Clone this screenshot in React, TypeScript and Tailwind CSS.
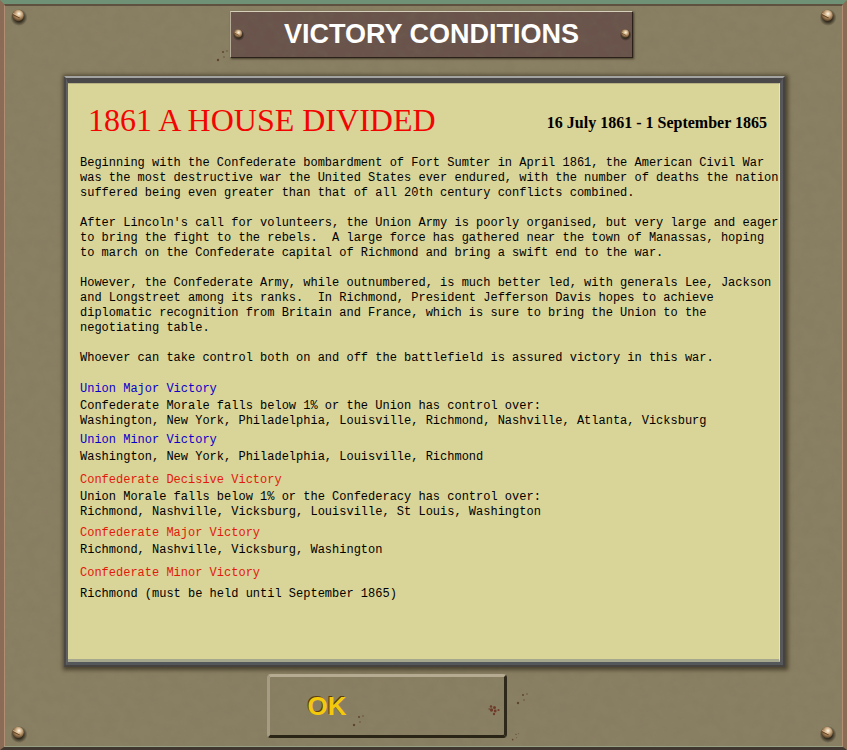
import React from 'react';

interface Condition {
  title: string;
  side: 'union' | 'confederate';
  lines: string[];
  spacing: string;
  gap: string;
}

const story: string[][] = [
  [
    'Beginning with the Confederate bombardment of Fort Sumter in April 1861, the American Civil War',
    'was the most destructive war the United States ever endured, with the number of deaths the nation',
    'suffered being even greater than that of all 20th century conflicts combined.',
  ],
  [
    "After Lincoln's call for volunteers, the Union Army is poorly organised, but very large and eager",
    'to bring the fight to the rebels.  A large force has gathered near the town of Manassas, hoping',
    'to march on the Confederate capital of Richmond and bring a swift end to the war.',
  ],
  [
    'However, the Confederate Army, while outnumbered, is much better led, with generals Lee, Jackson',
    'and Longstreet among its ranks.  In Richmond, President Jefferson Davis hopes to achieve',
    'diplomatic recognition from Britain and France, which is sure to bring the Union to the',
    'negotiating table.',
  ],
  ['Whoever can take control both on and off the battlefield is assured victory in this war.'],
];

const conditions: Condition[] = [
  {
    title: 'Union Major Victory', side: 'union', spacing: 'mt-4', gap: 'mt-0.5',
    lines: [
      'Confederate Morale falls below 1% or the Union has control over:',
      'Washington, New York, Philadelphia, Louisville, Richmond, Nashville, Atlanta, Vicksburg',
    ],
  },
  {
    title: 'Union Minor Victory', side: 'union', spacing: 'mt-1', gap: 'mt-0.5',
    lines: ['Washington, New York, Philadelphia, Louisville, Richmond'],
  },
  {
    title: 'Confederate Decisive Victory', side: 'confederate', spacing: 'mt-2', gap: 'mt-0.5',
    lines: [
      'Union Morale falls below 1% or the Confederacy has control over:',
      'Richmond, Nashville, Vicksburg, Louisville, St Louis, Washington',
    ],
  },
  {
    title: 'Confederate Major Victory', side: 'confederate', spacing: 'mt-1.5', gap: 'mt-0.5',
    lines: ['Richmond, Nashville, Vicksburg, Washington'],
  },
  {
    title: 'Confederate Minor Victory', side: 'confederate', spacing: 'mt-2', gap: 'mt-1.5',
    lines: ['Richmond (must be held until September 1865)'],
  },
];

const Defs: React.FC = () => (
  <svg className="absolute w-0 h-0" aria-hidden="true">
    <defs>
      <radialGradient id="brass" cx="0.58" cy="0.35" r="0.65">
        <stop offset="0" stopColor="#fff8ea" />
        <stop offset="0.3" stopColor="#dcc09a" />
        <stop offset="0.7" stopColor="#94714a" />
        <stop offset="1" stopColor="#4a3a26" />
      </radialGradient>
      <radialGradient id="screwShade">
        <stop offset="0.5" stopColor="#1d180e" stopOpacity="0.8" />
        <stop offset="1" stopColor="#1d180e" stopOpacity="0" />
      </radialGradient>
      <filter id="grain" x="0" y="0" width="100%" height="100%">
        <feTurbulence type="fractalNoise" baseFrequency="0.09" numOctaves="4" seed="7" />
        <feColorMatrix values="0 0 0 0 0.2  0 0 0 0 0.17  0 0 0 0 0.1  0.9 0 0 0 -0.32" />
      </filter>
    </defs>
  </svg>
);

const Grain: React.FC = () => (
  <svg className="absolute inset-0 w-full h-full opacity-40 pointer-events-none" aria-hidden="true">
    <rect width="100%" height="100%" filter="url(#grain)" />
  </svg>
);

const Screw: React.FC<{ className: string }> = ({ className }) => (
  <svg viewBox="0 0 20 20" className={`absolute ${className}`} aria-hidden="true">
    <circle cx="11" cy="11.5" r="8.5" fill="url(#screwShade)" />
    <circle cx="10" cy="9.5" r="5.8" fill="url(#brass)" />
    <path d="M4.6 8.4 L11.6 12" stroke="#6b4a2a" strokeWidth="1.1" />
    <path d="M5.2 7.4 L11 10.4" stroke="#e9cfa4" strokeWidth="0.6" />
  </svg>
);

// little flecks of rust on the painted metal
const Rust: React.FC<{ className: string }> = ({ className }) => (
  <svg viewBox="0 0 12 12" className={`absolute ${className}`} aria-hidden="true">
    <g fill="#6e3c2a">
      <circle cx="3" cy="2.5" r="1.2" />
      <circle cx="6.5" cy="3.4" r="1.5" />
      <circle cx="3.5" cy="6" r="1.7" />
      <circle cx="7.2" cy="7" r="1.4" />
      <circle cx="10.5" cy="6" r="1.1" />
      <circle cx="6" cy="10" r="1.2" />
      <circle cx="1.2" cy="5" r="0.8" />
    </g>
  </svg>
);

const Specks: React.FC<{ className: string }> = ({ className }) => (
  <svg viewBox="0 0 24 16" className={`absolute ${className}`} aria-hidden="true">
    <g fill="#5f4531">
      <circle cx="4" cy="12" r="1.2" />
      <circle cx="9" cy="4" r="1" />
      <circle cx="13" cy="3" r="0.7" />
      <circle cx="10" cy="9" r="0.7" />
    </g>
  </svg>
);

const App: React.FC = () => {
  return (
    <div className="relative min-h-screen overflow-hidden bg-[#897f63] font-['Liberation_Sans',sans-serif] border-t-4 border-t-[#6f9277] border-x-4 border-x-[#8a6b56] border-b-3 border-b-[#3f3730]">
      <Defs />
      <Grain />
      <div className="absolute inset-0 pointer-events-none border-t-2 border-t-[#5f5140] border-x border-x-[#b18e74] border-b border-b-[#98a083]"></div>
      <Screw className="left-1 top-0.5 w-5 h-5" />
      <Screw className="right-1.5 top-0.5 w-5 h-5" />
      <Screw className="left-1 bottom-1 w-5 h-5" />
      <Screw className="right-1.5 bottom-1 w-5 h-5" />
      <Specks className="left-[210px] top-11 w-6 h-4" />
      <Specks className="left-[510px] bottom-10 w-6 h-4" />
      <Specks className="left-[506px] bottom-1 w-4 h-3" />

      <div className="relative flex flex-col items-center pt-[7px] pb-2">
        <header className="w-full flex justify-center pl-4">
          <div className="relative w-[403px] h-[47px] flex items-center justify-center bg-[#69534b] border border-t-[#d6cfb9] border-l-[#b8ad98] border-r-[#2c201b] border-b-[#2c201b] shadow-[1px_1px_2px_#453c2a]">
            <Grain />
            <Screw className="left-0 top-[15px] w-3.5 h-3.5" />
            <Screw className="right-0 top-[15px] w-3.5 h-3.5" />
            <h1 className="relative pb-0.5 text-[27px] leading-7 font-bold text-white whitespace-nowrap">VICTORY CONDITIONS</h1>
          </div>
        </header>

        <div className="w-full pl-15 pr-[58px] pt-[18px]">
          <main className="border-2 border-t-[#a3a4a1] border-l-[#4b4845] border-r-[#46423f] border-b-[#46423f] shadow-[1px_1px_4px_2px_#4b432f]">
            <div className="border-t-5 border-t-[#4a4848] border-l-2 border-l-[#605f62] border-r-3 border-r-[#58575a] border-b-3 border-b-[#55585a]">
              <div className="min-h-[579px] bg-[#d9d498] border-t border-t-[#b6b283] border-b-3 border-b-[#a5a88c] border-r border-r-[#e9e5bb] pl-3 pr-3 pt-4">
                <div className="flex justify-between items-center pl-2">
                  <h2 className="font-['Liberation_Serif',serif] text-[32px] leading-10 text-[#f20500]">1861 A HOUSE DIVIDED</h2>
                  <p className="pt-1.5 font-['Liberation_Serif',serif] text-[16px] leading-5 font-bold text-black">16 July 1861 - 1 September 1865</p>
                </div>

                <div className="mt-4 font-['Liberation_Mono',monospace] text-[12px] leading-[15px] text-black whitespace-pre">
                  <div className="space-y-[15px]">
                    {story.map((lines, idx) => (
                      <p key={idx}>{lines.join('\n')}</p>
                    ))}
                  </div>
                  {conditions.map(c => (
                    <section key={c.title} className={c.spacing}>
                      <h3 className={c.side === 'union' ? 'text-[#0b00c8]' : 'text-[#e21a0c]'}>{c.title}</h3>
                      <p className={c.gap}>{c.lines.join('\n')}</p>
                    </section>
                  ))}
                </div>
              </div>
            </div>
          </main>
        </div>

        <footer className="w-full flex justify-center pr-[74px] pt-[7px]">
          <button
            type="button"
            className="relative w-60 h-16 pl-[38px] flex items-center bg-[#897f63] rounded-sm border-3 border-t-[#b5aa92] border-l-[#a69c84] border-r-[#2e281a] border-b-[#2a2416] text-[26px] leading-7 font-bold text-[#f4c90c] cursor-pointer"
          >
            <Grain />
            <Rust className="right-1 top-[27px] w-3 h-3" />
            <Specks className="left-[80px] top-9 w-6 h-4" />
            <span className="relative [text-shadow:-1px_-1px_0_#5a3d12]">OK</span>
          </button>
        </footer>
      </div>
    </div>
  );
};

export default App;
